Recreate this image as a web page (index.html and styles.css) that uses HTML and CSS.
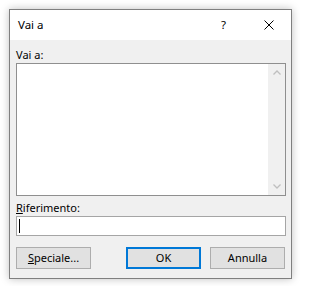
FILE: index.html
```html
<!DOCTYPE html>
<html lang="it">
<head>
<meta charset="utf-8">
<title>Vai a</title>
<link rel="stylesheet" href="styles.css">
</head>
<body>
<div class="dialog">
  <div class="titlebar">
    <span class="title">Vai a</span>
    <span class="help">?</span>
    <svg class="close" width="10" height="10" viewBox="0 0 10 10"><path d="M0.5 0.5L9.5 9.5M9.5 0.5L0.5 9.5" stroke="#000" stroke-width="1" fill="none"/></svg>
  </div>
  <div class="content">
    <div class="label">Vai a:</div>
    <div class="listbox">
      <div class="list-area"></div>
      <div class="scrollbar">
        <div class="sb-btn"><svg width="8" height="5" viewBox="0 0 8 5"><path d="M0.5 4.5L4 1L7.5 4.5" stroke="#bfbfbf" stroke-width="1.3" fill="none"/></svg></div>
        <div class="sb-track"></div>
        <div class="sb-btn"><svg width="8" height="5" viewBox="0 0 8 5"><path d="M0.5 0.5L4 4L7.5 0.5" stroke="#bfbfbf" stroke-width="1.3" fill="none"/></svg></div>
      </div>
    </div>
    <div class="label label-ref"><u>R</u>iferimento:</div>
    <div class="input"><span class="caret"></span></div>
    <div class="buttons">
      <div class="btn"><u>S</u>peciale...</div>
      <div class="btn btn-default">OK</div>
      <div class="btn btn-cancel">Annulla</div>
    </div>
  </div>
</div>
</body>
</html>
```
FILE: styles.css
```css
html, body {
  margin: 0;
  padding: 0;
  background: #ffffff;
}
body {
  width: 300px;
  height: 286px;
  overflow: hidden;
  font-family: "Noto Sans", "Open Sans", sans-serif;
  font-size: 11px;
  color: #000;
}
.dialog {
  box-sizing: border-box;
  margin: 9px 0 0 9px;
  width: 283px;
  height: 270px;
  border: 1px solid #7f7f7f;
  box-shadow: 0 0 8px rgba(0, 0, 0, 0.25);
  display: flex;
  flex-direction: column;
  background: #f0f0f0;
}
.titlebar {
  height: 30px;
  background: #ffffff;
  display: flex;
  align-items: center;
  padding: 0 17px 0 8px;
}
.title {
  flex: 1;
  font-size: 11.5px;
  line-height: 16px;
}
.help {
  font-size: 11.5px;
  line-height: 16px;
  margin-top: -1px;
}
.close {
  margin-left: 38px;
  display: block;
}
.content {
  flex: 1;
  padding: 7px 5px 0 6px;
  display: flex;
  flex-direction: column;
}
.label {
  line-height: 16px;
  height: 16px;
}
.listbox {
  box-sizing: border-box;
  height: 133px;
  border: 1px solid #8f8f8f;
  background: #ffffff;
  display: flex;
}
.list-area {
  flex: 1;
}
.scrollbar {
  width: 17px;
  background: #f0f0f0;
  display: flex;
  flex-direction: column;
}
.sb-btn {
  height: 17px;
  display: flex;
  align-items: center;
  justify-content: center;
}
.sb-track {
  flex: 1;
}
.label-ref {
  margin-top: 4px;
}
.input {
  box-sizing: border-box;
  height: 20px;
  border: 1px solid #a5a5a5;
  background: #ffffff;
  padding: 2px 0 0 2px;
}
.caret {
  display: block;
  width: 1px;
  height: 14px;
  background: #000;
}
.buttons {
  margin-top: 11px;
  display: flex;
}
.btn {
  box-sizing: border-box;
  width: 75px;
  height: 22px;
  border: 1px solid #adadad;
  background: #e1e1e1;
  display: flex;
  align-items: center;
  justify-content: center;
  line-height: 16px;
}
.btn-default {
  margin-left: 35px;
  border: 2px solid #0078d7;
}
.btn-cancel {
  margin-left: 9px;
}
u {
  text-decoration: underline;
  text-underline-offset: 1px;
}
```
